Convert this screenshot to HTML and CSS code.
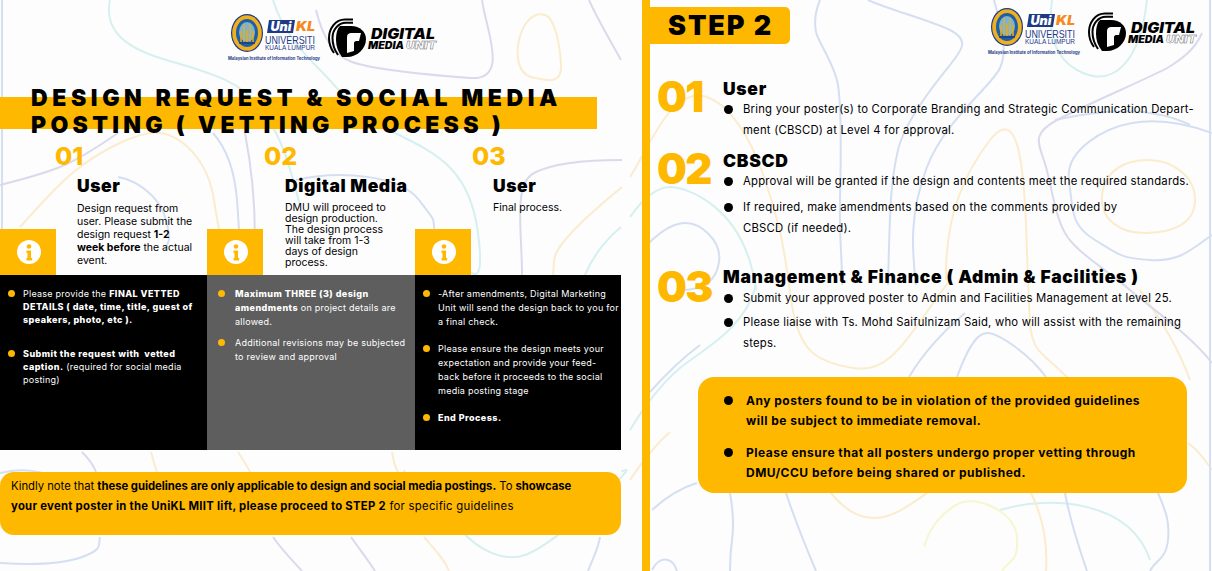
FILE: index.html
```html
<!DOCTYPE html>
<html lang="en">
<head>
<meta charset="utf-8">
<title>Design Request and Social Media Posting</title>
<link rel="stylesheet" href="styles.css">
</head>
<body>
<svg width="0" height="0" class="defs" aria-hidden="true">
  <symbol id="info" viewBox="0 0 24 24">
    <circle cx="12" cy="12" r="12" fill="#fff"/>
    <circle cx="12" cy="6.500" r="2.300" fill="#ffb800"/>
    <path d="M9.500 10.500H14V18H15.200V20.500H9.500V18H10.500V13H9.500Z" fill="#ffb800"/>
  </symbol>
</svg>

<div class="page">
  <svg class="contours" viewBox="0 0 1212 571" aria-hidden="true">
    <g class="c-teal">
      <path d="M110 0C104 28 122 46 160 58S242 78 264 112S290 170 300 205"/>
      <path d="M273 0C282 30 300 50 322 72S352 112 395 133S470 170 478 233S468 265 470 275"/>
      <path d="M461 530C480 552 505 562 525 555S585 515 612 487S620 475 622 470"/>
      <path d="M621 227C602 243 592 258 585 275"/>
      <path d="M1052 0C1048 30 1052 60 1083 73S1140 62 1147 0"/>
      <path d="M630 217C642 200 655 187 670 187S745 205 756 290"/>
      <path d="M630 430C645 405 660 385 680 368S745 330 756 285"/>
      <path d="M1000 510C1050 495 1130 500 1150 560"/>
    </g>
    <g class="c-yellow">
      <path d="M20 227C40 205 60 182 80 167S138 130 160 133S208 160 214 200S220 225 219 235"/>
      <path d="M518 45C522 20 535 12 545 15S560 45 561 65S548 80 535 78S516 65 518 45Z"/>
      <path d="M622 187C600 205 580 222 565 240S555 262 553 275"/>
      <path d="M151 452C158 475 165 500 172 535"/>
      <path d="M238 452C250 470 258 485 262 500"/>
      <path d="M424 537C435 550 445 560 449 571"/>
      <path d="M392 452C395 470 400 480 405 470"/>
      <path d="M630 177C650 145 665 105 690 97S745 120 765 180S785 260 792 305S815 362 853 368S905 340 950 280"/>
      <path d="M946 280C945 235 955 185 990 140S1025 200 1028 280S1030 340 1070 380"/>
      <path d="M1102 195C1105 170 1125 160 1148 160S1195 175 1195 200S1170 233 1145 233S1100 220 1102 195Z"/>
      <path d="M831 493C845 510 858 518 875 518S910 505 927 493"/>
      <path d="M1031 493C1042 515 1048 540 1046 571"/>
      <path d="M1188 443C1198 450 1205 460 1212 470"/>
      <path d="M630 480C640 465 655 445 670 432"/>
      <path d="M1140 290C1160 320 1175 340 1190 380"/>
    </g>
    <g class="c-lime">
      <path d="M924 547C930 525 945 510 960 503S1015 510 1017 537S1008 560 1002 571"/>
    </g>
    <g class="c-blue">
      <path d="M2 0V230"/>
      <path d="M118 177C135 180 160 195 166 220S168 240 165 250"/>
      <path d="M213 133C228 150 235 175 237 200S240 250 241 275"/>
      <path d="M296 180C340 170 400 175 419 200S432 215 435 235"/>
      <path d="M0 563C30 565 60 565 82 557S98 545 100 537"/>
      <path d="M0 473C20 468 45 470 57 480"/>
      <path d="M600 537C598 550 592 560 588 571"/>
      <path d="M1210 0V571"/>
      <path d="M820 0C815 12 814 22 816 32S835 65 838 85S841 160 840 200S842 250 842 285"/>
      <path d="M868 0C890 10 930 20 950 30S962 50 950 65S905 120 898 150S890 200 888 285"/>
      <path d="M994 0C1002 30 1008 50 1000 68S945 120 927 167S912 250 916 285"/>
      <path d="M1212 133C1190 125 1160 118 1132 123S1065 150 1069 180S1070 225 1095 240S1120 258 1150 260S1190 250 1212 235"/>
      <path d="M649 243C660 232 672 223 686 223S722 240 719 262S700 290 680 290"/>
      <path d="M957 377C965 355 975 333 987 333S1030 355 1046 377"/>
      <path d="M909 377C925 350 945 330 965 313"/>
      <path d="M730 493C733 510 734 525 732 540S730 560 730 571"/>
      <path d="M786 493C795 520 805 545 816 571"/>
      <path d="M1065 493C1070 520 1078 545 1087 571"/>
      <path d="M1158 493C1165 510 1170 520 1168 540S1155 560 1150 571"/>
      <path d="M652 510C665 498 680 488 697 483"/>
      <path d="M652 570C656 562 662 558 668 560S675 566 677 571"/>
      <path d="M650 392C665 375 680 360 700 345"/>
      <path d="M1055 120C1100 110 1150 105 1190 125"/>
    </g>
    <g class="c-purple">
      <path d="M316 10C322 35 332 55 352 62S430 75 470 78S486 30 482 0"/>
      <path d="M589 0C598 20 610 40 621 60"/>
      <path d="M0 185C20 180 40 175 60 167S105 142 118 133"/>
      <path d="M245 133C252 170 258 220 253 275"/>
      <path d="M622 160C590 160 555 162 534 173S522 230 522 275"/>
      <path d="M82 452C88 458 93 464 96 472"/>
      <path d="M273 537C282 550 292 560 302 571"/>
      <path d="M351 537C360 550 368 560 375 571"/>
      <path d="M1202 33C1195 50 1180 60 1169 67S1085 105 1057 120S1040 145 1046 167S1055 215 1065 233S1100 265 1130 290S1190 335 1212 363"/>
    </g>
  </svg>

  <section class="left">
    <div class="logo-row">
      <svg class="logo" viewBox="0 0 215 52" role="img" aria-label="UniKL and Digital Media Unit logos">
        <ellipse cx="21" cy="21" rx="16" ry="19" fill="#1e3a86"/>
        <ellipse cx="21" cy="21" rx="14.800" ry="17.800" fill="#eeb01e"/>
        <ellipse cx="21" cy="21" rx="11" ry="14" fill="#1f5fa6"/>
        <ellipse cx="21" cy="20" rx="8" ry="10" fill="#79b4d8"/>
        <path d="M15 30V19M18 30V12M21 30V18M24 30V12M27 30V19" stroke="#e6ad1e" stroke-width="1.500"/>
        <path d="M13 31h16" stroke="#1e3a86" stroke-width="1.500"/>
        <path d="M43 8h26l-2 13H41z" fill="#1e3a86"/>
        <text x="44.500" y="18.500" class="lg-uni" textLength="21" lengthAdjust="spacingAndGlyphs">Uni</text>
        <text x="70" y="18.500" class="lg-kl" textLength="19" lengthAdjust="spacingAndGlyphs">KL</text>
        <text x="39" y="32" class="lg-uv" textLength="50" lengthAdjust="spacingAndGlyphs">UNIVERSITI</text>
        <text x="39" y="37.500" class="lg-kul" textLength="50" lengthAdjust="spacingAndGlyphs">KUALA LUMPUR</text>
        <text x="2" y="48" class="lg-cap" textLength="92" lengthAdjust="spacingAndGlyphs">Malaysian Institute of Information Technology</text>
        <path d="M127 7.500H119C109 7.500 103 17 103 26C103 32 105 37 108 41" fill="none" stroke="#000" stroke-width="2"/>
        <path d="M127 10.800H120C112 10.800 106.500 18 106.500 26C106.500 32 108.500 38 112 43" fill="none" stroke="#000" stroke-width="2"/>
        <path d="M114 14H125C134 14 140 20 140 27C140 37 131 45 121 45H116C112 40 110 34 110 28C110 22 111 17 114 14Z" fill="#000"/>
        <path d="M121 41V25C121 22 123 21 125 21H135L133 29H130C129 29 128 30 128 31V39Z" fill="#fdfdfe"/>
        <text x="145" y="26.500" class="lg-dig" textLength="64" lengthAdjust="spacingAndGlyphs">DIGITAL</text>
        <text x="142" y="36.500" class="lg-med" textLength="36" lengthAdjust="spacingAndGlyphs">MEDIA</text>
        <text x="180" y="36.500" class="lg-unit" textLength="30" lengthAdjust="spacingAndGlyphs">UNIT</text>
      </svg>
    </div>
    <div class="title-wrap">
      <h1 class="title">DESIGN REQUEST &amp; SOCIAL MEDIA<br><span class="title-b">POSTING ( VETTING PROCESS )</span></h1>
    </div>

    <div class="steps">
      <article class="step">
        <div class="step-top">
          <div class="step-num">01</div>
          <div class="step-row">
            <div class="info"><svg class="info-icon"><use href="#info"/></svg></div>
            <div class="step-copy">
              <h2>User</h2>
              <p class="loose">Design request from<br>user. Please submit the<br>design request <b>1-2</b><br><b>week before</b> the actual<br>event.</p>
            </div>
          </div>
        </div>
        <ul class="panel dark tight">
          <li><span>Please provide the <b>FINAL VETTED<br>DETAILS ( date, time, title, guest of<br>speakers, photo, etc ).</b></span></li>
          <li class="gap-l"><span><b>Submit the request with&nbsp; vetted<br>caption.</b> (required for social media<br>posting)</span></li>
        </ul>
      </article>

      <article class="step">
        <div class="step-top">
          <div class="step-num">02</div>
          <div class="step-row">
            <div class="info"><svg class="info-icon"><use href="#info"/></svg></div>
            <div class="step-copy">
              <h2>Digital Media</h2>
              <p>DMU will proceed to<br>design production.<br>The design process<br>will take from 1-3<br>days of design<br>process.</p>
            </div>
          </div>
        </div>
        <ul class="panel grey">
          <li><span><b>Maximum THREE (3) design<br>amendments</b> on project details are<br>allowed.</span></li>
          <li class="gap-s"><span>Additional revisions may be subjected<br>to review and approval</span></li>
        </ul>
      </article>

      <article class="step">
        <div class="step-top">
          <div class="step-num">03</div>
          <div class="step-row">
            <div class="info"><svg class="info-icon"><use href="#info"/></svg></div>
            <div class="step-copy">
              <h2>User</h2>
              <p>Final process.</p>
            </div>
          </div>
        </div>
        <ul class="panel dark">
          <li><span>-After amendments, Digital Marketing<br>Unit will send the design back to you for<br>a final check.</span></li>
          <li class="gap-m"><span>Please ensure the design meets your<br>expectation and provide your feed-<br>back before it proceeds to the social<br>media posting stage</span></li>
          <li class="gap-m"><span><b>End Process.</b></span></li>
        </ul>
      </article>
    </div>

    <p class="note"><span class="note-a">Kindly note that <b>these guidelines are only applicable to design and social media postings.</b> To <b>showcase</b></span><br><span class="note-b"><b>your event poster in the UniKL MIIT lift, please proceed to STEP 2</b> for specific guidelines</span></p>
  </section>

  <section class="right">
    <header class="right-head">
      <div class="tab">STEP 2</div>
      <svg class="logo" viewBox="0 0 215 52" role="img" aria-label="UniKL and Digital Media Unit logos">
        <ellipse cx="21" cy="21" rx="16" ry="19" fill="#1e3a86"/>
        <ellipse cx="21" cy="21" rx="14.800" ry="17.800" fill="#eeb01e"/>
        <ellipse cx="21" cy="21" rx="11" ry="14" fill="#1f5fa6"/>
        <ellipse cx="21" cy="20" rx="8" ry="10" fill="#79b4d8"/>
        <path d="M15 30V19M18 30V12M21 30V18M24 30V12M27 30V19" stroke="#e6ad1e" stroke-width="1.500"/>
        <path d="M13 31h16" stroke="#1e3a86" stroke-width="1.500"/>
        <path d="M43 8h26l-2 13H41z" fill="#1e3a86"/>
        <text x="44.500" y="18.500" class="lg-uni" textLength="21" lengthAdjust="spacingAndGlyphs">Uni</text>
        <text x="70" y="18.500" class="lg-kl" textLength="19" lengthAdjust="spacingAndGlyphs">KL</text>
        <text x="39" y="32" class="lg-uv" textLength="50" lengthAdjust="spacingAndGlyphs">UNIVERSITI</text>
        <text x="39" y="37.500" class="lg-kul" textLength="50" lengthAdjust="spacingAndGlyphs">KUALA LUMPUR</text>
        <text x="2" y="48" class="lg-cap" textLength="92" lengthAdjust="spacingAndGlyphs">Malaysian Institute of Information Technology</text>
        <path d="M127 7.500H119C109 7.500 103 17 103 26C103 32 105 37 108 41" fill="none" stroke="#000" stroke-width="2"/>
        <path d="M127 10.800H120C112 10.800 106.500 18 106.500 26C106.500 32 108.500 38 112 43" fill="none" stroke="#000" stroke-width="2"/>
        <path d="M114 14H125C134 14 140 20 140 27C140 37 131 45 121 45H116C112 40 110 34 110 28C110 22 111 17 114 14Z" fill="#000"/>
        <path d="M121 41V25C121 22 123 21 125 21H135L133 29H130C129 29 128 30 128 31V39Z" fill="#fdfdfe"/>
        <text x="145" y="26.500" class="lg-dig" textLength="64" lengthAdjust="spacingAndGlyphs">DIGITAL</text>
        <text x="142" y="36.500" class="lg-med" textLength="36" lengthAdjust="spacingAndGlyphs">MEDIA</text>
        <text x="180" y="36.500" class="lg-unit" textLength="30" lengthAdjust="spacingAndGlyphs">UNIT</text>
      </svg>
    </header>

    <div class="sec sec-1">
      <div class="sec-num">01</div>
      <div>
        <h3>User</h3>
        <ul class="bullets">
          <li><span>Bring your poster(s) to Corporate Branding and Strategic Communication Depart-<br>ment (CBSCD) at Level 4 for approval.</span></li>
        </ul>
      </div>
    </div>

    <div class="sec sec-2">
      <div class="sec-num">02</div>
      <div>
        <h3>CBSCD</h3>
        <ul class="bullets">
          <li><span>Approval will be granted if the design and contents meet the required standards.</span></li>
          <li><span>If required, make amendments based on the comments provided by<br>CBSCD (if needed).</span></li>
        </ul>
      </div>
    </div>

    <div class="sec sec-3">
      <div class="sec-num">03</div>
      <div>
        <h3>Management &amp; Finance ( Admin &amp; Facilities )</h3>
        <ul class="bullets">
          <li><span>Submit your approved poster to Admin and Facilities Management at level 25.</span></li>
          <li><span>Please liaise with Ts. Mohd Saifulnizam Said, who will assist with the remaining<br>steps.</span></li>
        </ul>
      </div>
    </div>

    <ul class="callout">
      <li><span>Any posters found to be in violation of the provided guidelines<br>will be subject to immediate removal.</span></li>
      <li><span>Please ensure that all posters undergo proper vetting through<br>DMU/CCU before being shared or published.</span></li>
    </ul>
  </section>
</div>
</body>
</html>
```

FILE: styles.css
```css
* { box-sizing: border-box; }
html, body { margin: 0; padding: 0; }
body { font-family: Inter, "Liberation Sans", sans-serif; color: #000; background: #fdfdfe; }
h1, h2, h3, p, ul { margin: 0; padding: 0; }
ul { list-style: none; }

.defs { position: absolute; }
.page { position: relative; width: 1212px; height: 571px; overflow: hidden; display: flex; background: #fdfdfe; }
.contours { position: absolute; inset: 0; width: 1212px; height: 571px; fill: none; stroke-width: 2; }
.c-teal { stroke: #d5f0ee; }
.c-yellow { stroke: #fbeccd; }
.c-lime { stroke: #f6f6cf; }
.c-blue { stroke: #d5dff2; }
.c-purple { stroke: #d9dbec; }

.left, .right { position: relative; }
.left { width: 642px; flex: none; }
.right { flex: 1; border-left: 8px solid #ffb800; }

/* logos */
.logo { display: block; width: 215px; height: 52px; overflow: visible; }
.logo-row { height: 85px; padding: 12px 0 0 226px; }
.lg-uni { font: italic 900 12.500px Inter, sans-serif; fill: #fff; }
.lg-kl { font: italic 900 12.500px Inter, sans-serif; fill: #f58a1f; }
.lg-uv { font: 400 10.500px "Liberation Sans", sans-serif; fill: #1e3a86; }
.lg-kul { font: 400 7px "Liberation Sans", sans-serif; fill: #1e3a86; }
.lg-cap { font: 700 4.400px Inter, sans-serif; fill: #1e3a86; }
.lg-dig { font: italic 900 14px Inter, sans-serif; fill: #000; }
.lg-med { font: italic 900 10px Inter, sans-serif; fill: #000; }
.lg-unit { font: italic 900 10px Inter, sans-serif; fill: #fdfdfe; stroke: #666; stroke-width: .4; }

/* title */
.title-wrap { position: relative; height: 59px; }
.title-wrap::before { content: ""; position: absolute; left: 0; top: 12px; width: 597px; height: 32px; background: #ffb800; }
.title { position: relative; padding-left: 31px; font-size: 23px; font-weight: 900; line-height: 27px; letter-spacing: 4.600px; white-space: nowrap; }
.title-b { letter-spacing: 4.300px; }

/* three steps */
.steps { display: grid; grid-template-columns: 207px 208px 206px; width: 621px; }
.step-top { height: 131px; display: flex; flex-direction: column; }
.step-num { padding-left: 55px; height: 34px; color: #ffb800; font-size: 25px; font-weight: 800; line-height: 25px; }
.step + .step .step-num { padding-left: 57px; }
.step-row { display: flex; flex: 1; min-height: 0; }
.info { flex: none; align-self: flex-end; width: 56px; height: 46px; padding-left: 1px; background: #ffb800; display: flex; align-items: center; justify-content: center; }
.info-icon { width: 24px; height: 24px; }
.step-copy { margin-left: 21px; flex: 1; min-width: 0; white-space: nowrap; }
.step + .step .step-copy { margin-left: 22px; }
.step-copy h2 { font-size: 17.500px; font-weight: 900; line-height: 15px; letter-spacing: .6px; }
.step-copy p { margin-top: 9px; font-size: 10.500px; line-height: 11px; }
.step-copy p.loose { line-height: 13px; }

.panel { height: 175px; padding: 12px 0 0 8px; color: #fff; font-size: 9px; line-height: 14px; letter-spacing: .25px; white-space: nowrap; }
.dark { background: #000; }
.grey { background: #5e5e5e; padding-left: 11px; }
.tight { line-height: 13px; }
.panel li { display: flex; gap: 8px; }
.grey li { gap: 10px; }
.panel li::before { content: ""; flex: none; width: 7px; height: 7px; margin-top: 3px; border-radius: 50%; background: #ffb800; }
.gap-l { margin-top: 21px; }
.gap-s { margin-top: 7px; }
.gap-m { margin-top: 13px; }
.panel b { font-weight: 800; letter-spacing: .45px; }

/* note */
.note { margin-top: 22px; width: 621px; height: 63px; padding: 4px 0 0 11px; background: #ffb800; border-radius: 14px; font-size: 11.300px; line-height: 20px; white-space: nowrap; }
.note b { font-weight: 700; }
.note-a { letter-spacing: -.03px; }
.note-b { letter-spacing: .28px; }

/* right */
.right-head { display: flex; justify-content: space-between; height: 75px; padding: 7px 11px 0 0; position: relative; }
.tab { width: 140px; height: 37px; background: #ffb800; border-radius: 0 5px 5px 0; padding-left: 18px; font-size: 27px; font-weight: 900; line-height: 37px; letter-spacing: 1.900px; }
.right-head .logo { margin-top: -1px; }

.sec { display: grid; grid-template-columns: 66px 1fr; padding-left: 7px; white-space: nowrap; }
.sec-num { color: #ffb800; font-size: 42px; font-weight: 900; line-height: 44px; letter-spacing: -1.500px; }
.sec-3 .sec-num { padding-top: 2px; }
.sec h3 { padding-top: 5px; font-size: 17.500px; font-weight: 900; line-height: 17px; letter-spacing: .7px; }
.sec-2 { margin-top: 6px; }
.sec-3 { margin-top: 24px; }
.bullets { margin-top: 2px; font-size: 11.300px; line-height: 21px; letter-spacing: .22px; }
.sec-3 .bullets { margin-top: 3px; }
.bullets li { display: flex; gap: 10px; }
.bullets li + li { margin-top: 5px; }
.sec-3 .bullets li + li { margin-top: 3px; }
.bullets li::before { content: ""; flex: none; width: 9px; height: 9px; margin: 6px 0 0 1px; border-radius: 50%; background: #000; }

.callout { position: absolute; left: 48px; top: 377px; width: 489px; height: 116px; padding: 14px 0 0 26px; background: #ffb800; border-radius: 16px; font-size: 12px; font-weight: 700; line-height: 20px; letter-spacing: .5px; white-space: nowrap; }
.callout li { display: flex; gap: 13px; }
.callout li + li { margin-top: 12px; }
.callout li::before { content: ""; flex: none; width: 9px; height: 9px; margin-top: 5px; border-radius: 50%; background: #000; }
```
